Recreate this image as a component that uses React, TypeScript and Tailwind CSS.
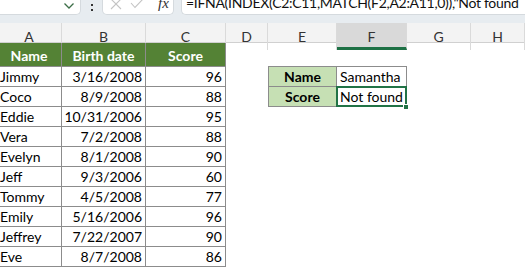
import React from "react";

const cols = "grid grid-cols-[65px_84px_80px_42px_69px_70px_64px_1fr] -ml-[3px]";

const rows = [
  ["Jimmy", "3/16/2008", "96"],
  ["Coco", "8/9/2008", "88"],
  ["Eddie", "10/31/2006", "95"],
  ["Vera", "7/2/2008", "88"],
  ["Evelyn", "8/1/2008", "90"],
  ["Jeff", "9/3/2006", "60"],
  ["Tommy", "4/5/2008", "77"],
  ["Emily", "5/16/2006", "96"],
  ["Jeffrey", "7/22/2007", "90"],
  ["Eve", "8/7/2008", "86"],
];

const letters = ["A", "B", "C", "D", "E", "F", "G", "H"];

const TopBar = () => (
  <div className="h-[23px] bg-[#e7ecf0] flex items-start relative">
    <div className="w-[81px] h-[15px] bg-white border-r border-b border-[#d5dade] rounded-br-[5px] flex justify-end items-center pr-[4px]">
      <svg width="12" height="8" viewBox="0 0 12 8" className="mr-[1px] -mt-[3px]">
        <path d="M1.5 1.5 L6 6 L10.5 1.5" fill="none" stroke="#3c6e47" strokeWidth="1.3" />
      </svg>
    </div>
    <div className="w-[21px] h-[15px] flex flex-col items-center justify-center gap-[3px]">
      <div className="w-[2px] h-[2px] bg-[#333]" />
      <div className="w-[2px] h-[2px] bg-[#333]" />
    </div>
    <div className="w-[72px] h-[15px] bg-white border-l border-r border-b border-[#d5dade] rounded-b-[5px] flex items-start pl-[7px] gap-[8px] overflow-hidden">
      <svg width="12" height="10" viewBox="0 2 12 10">
        <path d="M1 1 L11 11 M11 1 L1 11" stroke="#c4c4c4" strokeWidth="1.1" />
      </svg>
      <svg width="14" height="9" viewBox="0 2 14 9">
        <path d="M1 5 L5 9.5 L13 1" fill="none" stroke="#c4c4c4" strokeWidth="1.1" />
      </svg>
      <span className="ml-[6px] -mt-[6px] text-[15px] leading-[18px] italic text-[#333] font-['Liberation_Serif',serif]">fx</span>
    </div>
    <div className="ml-[7px] flex-1 h-[15px] bg-white border-l border-b border-[#d5dade] rounded-bl-[5px] overflow-hidden pl-[4px]">
      <div className="-mt-[7px] text-[14px] leading-[20px] text-[#111] whitespace-nowrap tracking-[-0.3px]">
        =IFNA(INDEX(C2:C11,MATCH(F2,A2:A11,0)),"Not found
      </div>
    </div>
  </div>
);

const ColumnHeaders = () => (
  <div className={`${cols} h-[20px] bg-[#f3f3f3] border-b border-[#d0d0d0]`}>
    {letters.map((l) => (
      <div
        key={l}
        className={`flex items-center justify-center text-[14px] text-[#333] border-r border-[#dadada] ${
          l === "F" ? "bg-[#d9d9d9] border-b-[3px] border-b-[#1e7145] pt-[3px]" : ""
        }`}
      >
        {l}
      </div>
    ))}
  </div>
);

const hdr = "bg-[#548235] text-white font-bold text-[14px] flex items-center justify-center border-r border-b border-[#8c8c8c] pt-[1px]";
const line = "border-r border-b border-[#8c8c8c] flex items-center whitespace-nowrap overflow-hidden";

export default function App() {
  return (
    <div className="w-[525px] h-[271px] overflow-hidden bg-white font-['Lato',sans-serif]">
      <TopBar />
      <ColumnHeaders />
      <div className={`${cols} h-[24px]`}>
        <div className={hdr}>Name</div>
        <div className={hdr}>Birth date</div>
        <div className={hdr}>Score</div>
        <div />
        <div className="border-b border-[#8c8c8c]" />
        <div className="border-b border-[#8c8c8c]" />
        <div />
        <div />
      </div>
      {rows.map((r, i) => (
        <div key={r[0]} className={`${cols} h-[20px] text-[14px] text-black`}>
          <div className={`${line} pl-[3px]`}>{r[0]}</div>
          <div className={`${line} pr-[3px] justify-end`}>{r[1]}</div>
          <div className={`${line} pr-[3px] justify-end`}>{r[2]}</div>
          <div />
          {i === 0 && (
            <>
              <div className={`${line} bg-[#c6e0b4] font-bold border-l justify-center`}>Name</div>
              <div className={`${line} pl-[3px]`}>Samantha</div>
            </>
          )}
          {i === 1 && (
            <>
              <div className={`${line} bg-[#c6e0b4] font-bold border-l justify-center`}>Score</div>
              <div className="relative">
                <div className="-mt-[1px] -ml-[1px] w-[71px] h-[21px] border-2 border-[#217346] pl-[2px] flex items-center whitespace-nowrap overflow-hidden">
                  Not found
                </div>
                <div className="absolute -right-[2px] -bottom-[3px] w-[6px] h-[6px] bg-[#217346] border border-white" />
              </div>
            </>
          )}
          {i > 1 && (
            <>
              <div />
              <div />
            </>
          )}
          <div />
          <div />
        </div>
      ))}
    </div>
  );
}
